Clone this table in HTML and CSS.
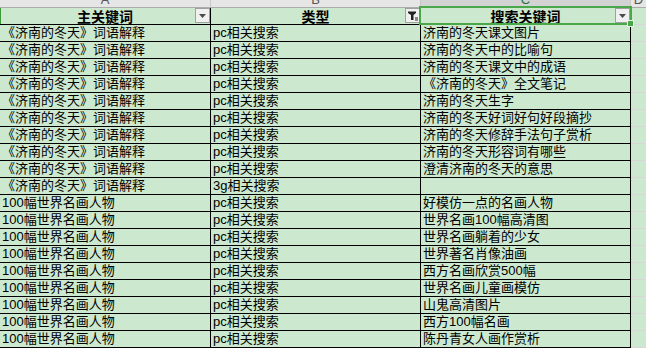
FILE: index.html
```html
<!DOCTYPE html>
<html lang="zh-CN">
<head>
<meta charset="utf-8">
<title>关键词表</title>
<link rel="stylesheet" href="styles.css">
</head>
<body>
<div class="sheet">
  <div class="colheads">
    <div class="ch"><span>A</span></div>
    <div class="ch"><span>B</span></div>
    <div class="ch ch-sel"><span>C</span></div>
    <div class="ch ch-d"><span>D</span></div>
  </div>
  <div class="grid">
    <div class="cell hd hd-first">主关键词<span class="flt"><svg viewBox="0 0 13 13" width="13" height="13"><polygon points="3,5 10,5 6.5,9" fill="#4a4a4a"/></svg></span></div>
    <div class="cell hd">类型<span class="flt"><svg viewBox="0 0 13 13" width="13" height="13"><polygon points="2,2.5 10,2.5 10,4 7.5,6 7.5,11 5,11 5,6 2,4" fill="#222"/><rect x="9" y="8.5" width="3" height="1" fill="#222"/><rect x="9" y="10.5" width="3" height="1" fill="#222"/></svg></span></div>
    <div class="cell hd">搜索关键词<span class="flt"><svg viewBox="0 0 13 13" width="13" height="13"><polygon points="3,5 10,5 6.5,9" fill="#4a4a4a"/></svg></span><span class="selection"><span class="handle"></span></span></div>
    <div class="cell d"></div>

    <div class="cell">《济南的冬天》词语解释</div><div class="cell">pc相关搜索</div><div class="cell">济南的冬天课文图片</div><div class="cell d"></div>
    <div class="cell">《济南的冬天》词语解释</div><div class="cell">pc相关搜索</div><div class="cell">济南的冬天中的比喻句</div><div class="cell d"></div>
    <div class="cell">《济南的冬天》词语解释</div><div class="cell">pc相关搜索</div><div class="cell">济南的冬天课文中的成语</div><div class="cell d"></div>
    <div class="cell">《济南的冬天》词语解释</div><div class="cell">pc相关搜索</div><div class="cell">《济南的冬天》全文笔记</div><div class="cell d"></div>
    <div class="cell">《济南的冬天》词语解释</div><div class="cell">pc相关搜索</div><div class="cell">济南的冬天生字</div><div class="cell d"></div>
    <div class="cell">《济南的冬天》词语解释</div><div class="cell">pc相关搜索</div><div class="cell">济南的冬天好词好句好段摘抄</div><div class="cell d"></div>
    <div class="cell">《济南的冬天》词语解释</div><div class="cell">pc相关搜索</div><div class="cell">济南的冬天修辞手法句子赏析</div><div class="cell d"></div>
    <div class="cell">《济南的冬天》词语解释</div><div class="cell">pc相关搜索</div><div class="cell">济南的冬天形容词有哪些</div><div class="cell d"></div>
    <div class="cell">《济南的冬天》词语解释</div><div class="cell">pc相关搜索</div><div class="cell">澄清济南的冬天的意思</div><div class="cell d"></div>
    <div class="cell">《济南的冬天》词语解释</div><div class="cell">3g相关搜索</div><div class="cell"></div><div class="cell d"></div>
    <div class="cell">100幅世界名画人物</div><div class="cell">pc相关搜索</div><div class="cell">好模仿一点的名画人物</div><div class="cell d"></div>
    <div class="cell">100幅世界名画人物</div><div class="cell">pc相关搜索</div><div class="cell">世界名画100幅高清图</div><div class="cell d"></div>
    <div class="cell">100幅世界名画人物</div><div class="cell">pc相关搜索</div><div class="cell">世界名画躺着的少女</div><div class="cell d"></div>
    <div class="cell">100幅世界名画人物</div><div class="cell">pc相关搜索</div><div class="cell">世界著名肖像油画</div><div class="cell d"></div>
    <div class="cell">100幅世界名画人物</div><div class="cell">pc相关搜索</div><div class="cell">西方名画欣赏500幅</div><div class="cell d"></div>
    <div class="cell">100幅世界名画人物</div><div class="cell">pc相关搜索</div><div class="cell">世界名画儿童画模仿</div><div class="cell d"></div>
    <div class="cell">100幅世界名画人物</div><div class="cell">pc相关搜索</div><div class="cell">山鬼高清图片</div><div class="cell d"></div>
    <div class="cell">100幅世界名画人物</div><div class="cell">pc相关搜索</div><div class="cell">西方100幅名画</div><div class="cell d"></div>
    <div class="cell">100幅世界名画人物</div><div class="cell">pc相关搜索</div><div class="cell">陈丹青女人画作赏析</div><div class="cell d"></div>
  </div>
</div>
</body>
</html>
```

FILE: styles.css
```css
html, body {
  margin: 0;
  padding: 0;
}
body {
  width: 646px;
  height: 348px;
  overflow: hidden;
  background: #cce8cf;
  font-family: "Liberation Sans", "Noto Sans CJK SC", sans-serif;
  color: #000;
}
.sheet {
  width: 646px;
}
.colheads {
  display: grid;
  grid-template-columns: 211px 210px 210px 1fr;
  height: 7px;
  overflow: hidden;
  background: #e6e6e6;
  border-bottom: 1px solid #ababab;
}
.ch {
  border-right: 1px solid #c8c8c8;
  color: #555;
  font-size: 13px;
  text-align: center;
}
.ch span {
  display: block;
  line-height: 13px;
  margin-top: -7px;
}
.ch-sel {
  background: #d3d3d3;
  color: #217346;
}
.ch-d {
  border-right: none;
}
.grid {
  display: grid;
  grid-template-columns: 211px 210px 210px 1fr;
  grid-auto-rows: 17px;
}
.cell {
  box-sizing: border-box;
  border-right: 1px solid #000;
  border-bottom: 1px solid #000;
  padding-left: 2px;
  font-size: 13px;
  line-height: 16px;
  white-space: nowrap;
  overflow: hidden;
}
.cell.d {
  border-right: none;
  border-bottom: 1px solid #d6d6d6;
}
.hd {
  position: relative;
  overflow: visible;
  padding-left: 0;
  text-align: center;
  font-family: "Noto Sans CJK SC", sans-serif;
  font-weight: 700;
  font-size: 14px;
}
.hd-first {
  box-shadow: inset 1px 0 0 #3c9a3c;
}
.flt {
  position: absolute;
  right: 0;
  top: 0;
  width: 15px;
  height: 15px;
  box-sizing: border-box;
  border: 1px solid #a0a0a0;
  background: #f0f0f0;
  display: flex;
}
.flt svg {
  display: block;
}
.selection {
  position: absolute;
  left: -2px;
  top: -2px;
  right: -2px;
  bottom: -1px;
  border: 2px solid #4aa84a;
  z-index: 2;
  pointer-events: none;
}
.handle {
  position: absolute;
  right: -4px;
  bottom: -4px;
  width: 5px;
  height: 5px;
  background: #4aa84a;
  border: 1px solid #e8f4e8;
}
```
